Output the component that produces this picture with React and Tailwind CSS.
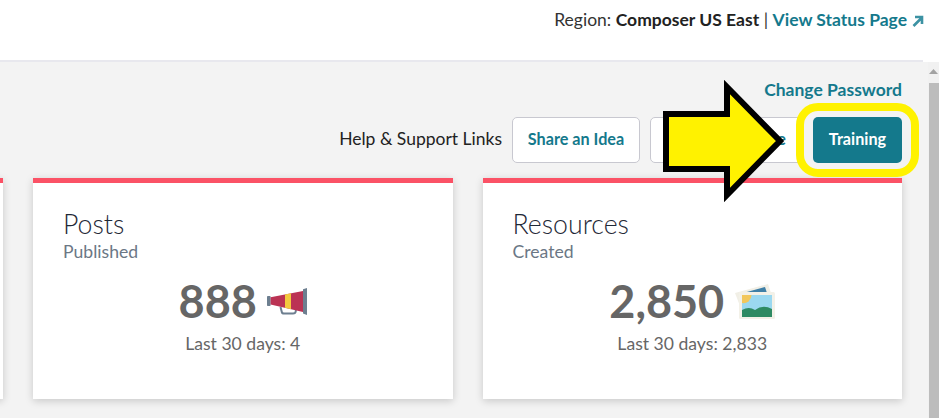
import React from "react";

const teal = "text-[#14798c]";

function Megaphone() {
  return (
    <svg width="40" height="27" viewBox="0 0 40 27" className="ml-[10px]">
      <path d="M13.5 19 L14.8 24 Q15 25.5 17 25.5 H26 Q28.5 25.5 28.7 23.5 L29 21" fill="none" stroke="#6d7f90" strokeWidth="2" />
      <rect x="0" y="8" width="3.6" height="10" rx="0.8" fill="#6d7f90" />
      <path d="M3.6 9.2 L36 3 V24 L3.6 16.4 Z" fill="#bb3354" />
      <path d="M18 6.4 L24 5.3 V21.2 L18 19.8 Z" fill="#f3c93f" />
      <path d="M36 1.2 L40 0 V27 L36 25.5 Z" fill="#6d7f90" />
    </svg>
  );
}

function Photos() {
  return (
    <svg width="40" height="35" viewBox="0 0 40 35" className="ml-[11px]">
      <path d="M0 9 L33 0 L36 9 L5 22 Z" fill="#f1efe6" />
      <path d="M10 8.5 L30 3 L32 9 L12 10 Z" fill="#3f7fa6" />
      <rect x="4" y="8" width="36" height="27" rx="1.5" fill="#f3f1e8" />
      <rect x="7" y="11" width="30" height="22" fill="#9bd8f0" />
      <path d="M7 11 h9.5 a8 8 0 0 1 -9.5 8 Z" fill="#f2c75c" />
      <path d="M7 26 q7 -4 13 0 q8 -6 17 -1 V33 H7 Z" fill="#2e8a63" />
    </svg>
  );
}

function StatCard({ title, sub, value, icon, last }) {
  return (
    <div className="w-[419.5px] h-[221px] shrink-0 bg-white border-t-[5px] border-[#fb5266] shadow-[0_2px_8px_rgba(0,0,0,0.18)] pt-[26px] px-[30px]">
      <div className="text-[26.7px] leading-[30px] font-light text-[#1f2937]">{title}</div>
      <div className="text-[17.6px] leading-[22px] mt-[2px] text-[#6b7785]">{sub}</div>
      <div className="flex items-center justify-center h-[54px] mt-[11px]">
        <span className="text-[45px] leading-none font-bold text-[#666]">{value}</span>
        {icon}
      </div>
      <div className="text-center text-[17.6px] leading-[22px] text-[#666] mt-[5px]">{last}</div>
    </div>
  );
}

export default function App() {
  return (
    <div className="relative w-[939px] h-[418px] overflow-hidden bg-white flex flex-col font-['Lato','Open_Sans',sans-serif]">
      <div className="h-[62px] shrink-0 flex flex-col">
        <div className="flex justify-end pr-[15px] pt-[8px] text-[17.5px] leading-[24px] text-[#333]">
          <span>
            Region: <b className="font-bold text-[#222]">Composer US East</b> |{" "}
            <a className={`font-bold ${teal}`}>View Status Page</a>
            <svg width="12" height="12" viewBox="0 0 12 12" className="inline ml-[5px] align-[-1px]">
              <path d="M1.5 11 L9.5 3 M3 2 H10 V9" fill="none" stroke="#3c92a3" strokeWidth="2.6" />
            </svg>
          </span>
        </div>
        <div className="mt-auto h-[2px] w-[923px] bg-[#e8e8ee]" />
      </div>
      <div className="flex-1 flex min-h-0">
        <div className="flex-1 bg-[#f3f3f3] min-w-0 pr-[26px]">
          <div className="flex flex-col items-end">
            <a className={`mt-[16px] text-[17.5px] leading-[24px] font-bold ${teal}`}>Change Password</a>
            <div className="flex items-center mt-[15px] h-[46px]">
              <span className="text-[17.5px] text-[#222] mr-[10px] pb-[2px]">Help &amp; Support Links</span>
              <button className={`w-[128px] h-[46px] bg-white border border-[#c8c8d0] rounded-[5px] text-[16.2px] font-bold pb-[2px] ${teal}`}>Share an Idea</button>
              <button className={`w-[152px] h-[46px] ml-[10px] bg-white border border-[#c8c8d0] rounded-[5px] text-[16.2px] font-bold pb-[2px] ${teal}`}>Knowledge Base</button>
              <button className="w-[89px] h-[46px] ml-[11px] bg-[#14798c] rounded-[5px] text-[16.2px] font-bold pb-[2px] text-white">Training</button>
            </div>
          </div>
          <div className="flex justify-end gap-[30px] mt-[15px]">
            <div className="w-[419.5px] h-[221px] shrink-0 bg-white border-t-[5px] border-[#fb5266] shadow-[0_2px_8px_rgba(0,0,0,0.18)]" />
            <StatCard title="Posts" sub="Published" value="888" icon={<Megaphone />} last="Last 30 days: 4" />
            <StatCard title="Resources" sub="Created" value="2,850" icon={<Photos />} last="Last 30 days: 2,833" />
          </div>
        </div>
        <div className="w-[11px] shrink-0 bg-[#f1f1f1] relative">
          <svg width="11" height="8" viewBox="0 0 11 8" className="absolute top-[6px] left-0">
            <path d="M5.5 1 L10 6 H1 Z" fill="#a3a3a3" />
          </svg>
          <div className="absolute left-[1px] right-0 top-[21px] bottom-0 bg-[#bcbcbc]" />
        </div>
      </div>

      {/* overlay annotations */}
      <div className="absolute left-[796px] top-[103px] w-[123px] h-[74px] border-[8px] border-[#fff200] rounded-[22px]" />
      <svg width="939" height="418" className="absolute left-0 top-0 pointer-events-none">
        <polygon points="666,114 727,114 727,87 780,141 727,195 727,169 666,169" fill="#fff200" stroke="#000" strokeWidth="6" strokeLinejoin="miter" />
      </svg>
    </div>
  );
}
